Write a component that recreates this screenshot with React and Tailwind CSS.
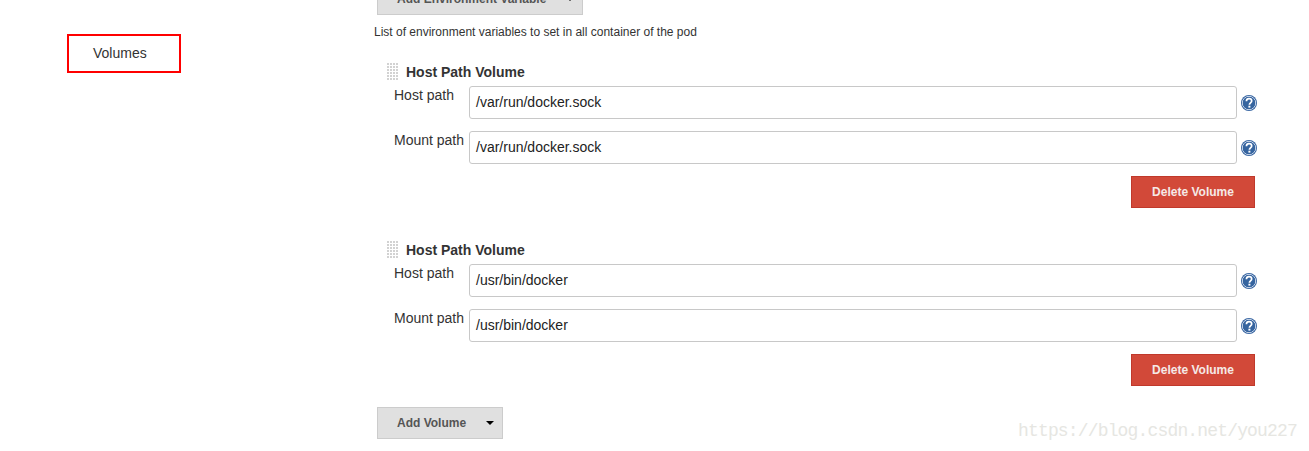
import React from "react";

const sans = "font-['Liberation_Sans',Arial,sans-serif]";

function Grip() {
  const dots = [];
  for (let y = 0; y < 6; y++)
    for (let x = 0; x < 4; x++)
      dots.push(<rect key={`${x}-${y}`} x={x * 3} y={y * 3} width="2" height="2" fill="#d2d2d2" />);
  return (
    <svg width="12" height="18" viewBox="0 0 12 18" className="block shrink-0">
      {dots}
    </svg>
  );
}

function Help() {
  return (
    <svg width="16" height="16" viewBox="0 0 16 16" className="block shrink-0">
      <circle cx="8" cy="8" r="8" fill="#2f5f9e" />
      <circle cx="8" cy="8" r="6.7" fill="none" stroke="#dfe7f2" strokeWidth="0.9" />
      <circle cx="8" cy="8" r="6" fill="#35649f" />
      <path d="M5.4 6.2C5.5 4.6 6.6 3.7 8 3.7c1.6 0 2.7 1 2.7 2.3 0 1.9-2.3 2-2.3 3.8" fill="none" stroke="#fff" strokeWidth="1.7" />
      <rect x="7.4" y="10.7" width="2" height="1.9" fill="#fff" />
    </svg>
  );
}

function Field({ label, value, className }) {
  return (
    <div className={`flex items-start ${className}`}>
      <div className="w-[82px] pl-[7px] pt-[1px] text-[14px] leading-[17px] text-[#333]">{label}</div>
      <div className="w-[768px] h-[33px] rounded-[3px] border border-[#c8c8c8] bg-white pl-[6px] text-[14px] leading-[31px] text-[#222]">
        {value}
      </div>
      <div className="ml-[4px] mt-[9px]">
        <Help />
      </div>
    </div>
  );
}

function Volume({ path, className }) {
  return (
    <section className={`pl-[13px] ${className}`}>
      <div className="h-[18px] flex items-center">
        <Grip />
        <h3 className="ml-[7px] text-[14px] leading-[18px] font-bold text-[#333]">Host Path Volume</h3>
      </div>
      <Field label="Host path" value={path} className="mt-[5px]" />
      <Field label="Mount path" value={path} className="mt-[12px]" />
      <div className="mt-[12px] flex justify-end w-[868px]">
        <button className="w-[124px] h-[32px] border border-[#c0392b] bg-[#d24939] text-[12px] font-bold text-[#f5e9e7]">
          Delete Volume
        </button>
      </div>
    </section>
  );
}

function AddButton({ label, className }) {
  return (
    <button className={`relative flex items-center h-[32px] border border-[#cccccc] bg-[#e0e0e0] text-[12px] font-bold text-[#555] ${className}`}>
      <span className="ml-[19px]">{label}</span>
      <span className="absolute right-[8px] top-[13px] w-0 h-0 border-x-[4px] border-x-transparent border-t-[4px] border-t-black" />
    </button>
  );
}

export default function App() {
  return (
    <div className={`relative flex w-[1309px] h-[451px] overflow-hidden bg-white ${sans}`}>
      <aside className="w-[374px] shrink-0 pl-[67px] pt-[34px]">
        <div className="w-[114px] h-[39px] border-2 border-[#ff0000] pl-[24px] text-[14px] leading-[35px] text-[#333]">
          Volumes
        </div>
      </aside>
      <main className="flex-1">
        <AddButton label="Add Environment Variable" className="w-[206px] mt-[-17px] ml-[3px]" />
        <p className="mt-[10px] text-[12px] leading-[14px] text-[#333]">List of environment variables to set in all container of the pod</p>
        <Volume path="/var/run/docker.sock" className="mt-[24px]" />
        <Volume path="/usr/bin/docker" className="mt-[33px]" />
        <AddButton label="Add Volume" className="w-[126px] mt-[21px] ml-[3px]" />
      </main>
      <div className="absolute left-[1018px] top-[420px] whitespace-nowrap font-['Liberation_Mono',monospace] text-[18px] tracking-[-0.84px] leading-[22px] text-[#e6e6e2]">
        https://blog.csdn.net/you227
      </div>
    </div>
  );
}
